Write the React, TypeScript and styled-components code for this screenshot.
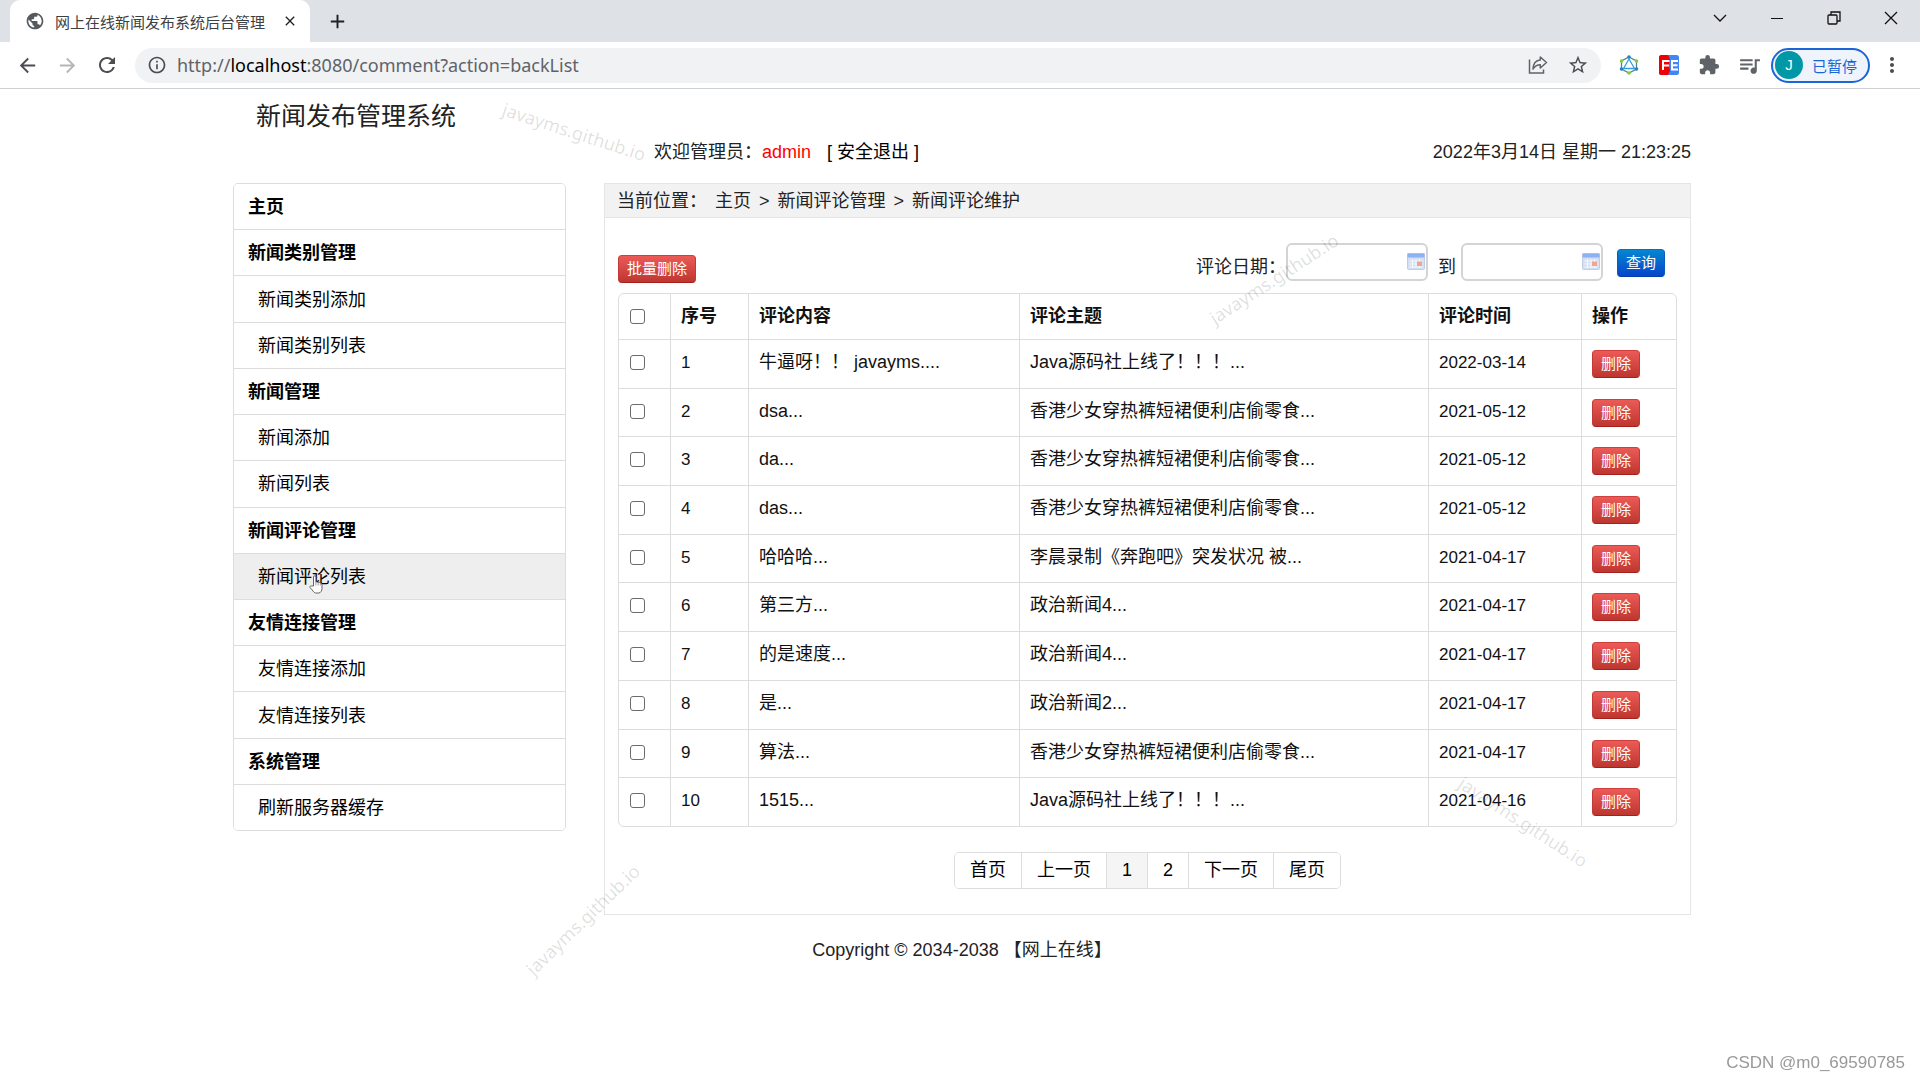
import React from "react";
import styled, { createGlobalStyle, css } from "styled-components";
import {
  MdAdd,
  MdArrowBack,
  MdArrowForward,
  MdClose,
  MdExtension,
  MdInfoOutline,
  MdMoreVert,
  MdPublic,
  MdQueueMusic,
  MdRefresh,
  MdStarBorder,
} from "react-icons/md";

const GlobalStyle = createGlobalStyle`
  * { box-sizing: border-box; }
  body {
    margin: 0;
    background: #fff;
    color: #222;
    font-family: "Liberation Sans", "Noto Sans CJK SC", sans-serif;
    font-size: 18px;
    line-height: 25px;
  }
  a { color: #000; text-decoration: none; }
  button, input { font-family: inherit; }
`;

/* ---------- Browser frame ---------- */

const TabStrip = styled.div`
  display: flex;
  height: 42px;
  padding-left: 10px;
  background: #dee1e6;
`;

const Tab = styled.div`
  display: flex;
  align-items: center;
  width: 300px;
  padding: 0 12px 0 15px;
  border-radius: 10px 10px 0 0;
  background: #fff;
  color: #3c4043;
  font-family: "Noto Sans CJK SC", sans-serif;
  font-size: 15px;
`;

const TabTitle = styled.span`
  flex: 1;
  margin-left: 10px;
  white-space: nowrap;
`;

const IconButton = styled.button<{ $w?: number; $color?: string }>`
  display: flex;
  flex: none;
  align-items: center;
  justify-content: center;
  width: ${(p) => p.$w ?? 40}px;
  padding: 0;
  border: 0;
  background: none;
  color: ${(p) => p.$color ?? "#4a4d51"};
`;

const WindowControls = styled.div`
  display: flex;
  height: 36px;
  margin-left: auto;
`;

const Toolbar = styled.div`
  display: flex;
  align-items: center;
  height: 47px;
  padding: 0 7px;
  border-bottom: 1px solid #cfd1d4;
  background: #fff;
`;

const AddressBar = styled.div`
  display: flex;
  flex: 1;
  align-items: center;
  height: 35px;
  margin: 0 8px;
  padding: 0 3px 0 12px;
  border-radius: 18px;
  background: #f0f2f4;
`;

const Url = styled.span`
  flex: 1;
  margin-left: 10px;
  color: #5f6368;
  font-family: "Noto Sans", sans-serif;
  font-size: 18px;

  b { color: #000; font-weight: 400; }
`;

const Profile = styled.button`
  display: flex;
  align-items: center;
  width: 99px;
  height: 35px;
  margin-left: 2px;
  padding: 0 0 0 2px;
  border: 2px solid #1a66d6;
  border-radius: 18px;
  background: #eff3fb;
  color: #1a66d6;
  font-size: 15px;
`;

const Avatar = styled.span`
  width: 28px;
  height: 28px;
  margin-right: 9px;
  border-radius: 50%;
  background: #0097a7;
  color: #fff;
  line-height: 28px;
`;

/* ---------- Page ---------- */

const Page = styled.div`
  position: relative;
  max-width: 1462px;
  margin: 0 auto;
  padding: 0 0 40px 4px;
`;

const columns = css`
  display: grid;
  grid-template-columns: 333px 1fr;
  column-gap: 38px;
  align-items: start;
`;

const Header = styled.header`
  ${columns}
  height: 94px;
`;

const Title = styled.h1`
  margin: 8px 0 0 23px;
  font-size: 25px;
  font-weight: 400;
  line-height: 38px;
`;

const UserLine = styled.div`
  display: flex;
  padding: 51px 0 0 50px;
`;

const UserName = styled.span`
  margin-right: 16px;
  color: #f00;
`;

const Clock = styled.time`
  margin-left: auto;
`;

const Body = styled.div`
  ${columns}
`;

const Menu = styled.nav`
  display: flex;
  flex-direction: column;
  min-height: 648px;
  border: 1px solid #ddd;
  border-radius: 5px;
  overflow: hidden;
`;

const MenuLink = styled.a<{ $group?: boolean; $active?: boolean }>`
  display: flex;
  flex: 1;
  align-items: center;
  padding: 11px ${(p) => (p.$group ? 14 : 24)}px 9px;
  background: ${(p) => (p.$active ? "#eee" : "#fff")};
  font-weight: ${(p) => (p.$group ? 700 : 400)};

  & + & { border-top: 1px solid #ddd; }
`;

const Panel = styled.main`
  border: 1px solid #e5e5e5;
`;

const Breadcrumb = styled.ol`
  display: flex;
  gap: 8px;
  margin: 0;
  padding: 5px 12px 3px;
  border-bottom: 1px solid #e5e5e5;
  background: #f2f2f2;
  list-style: none;

  a { color: #222; }
`;

const Content = styled.div`
  padding: 25px 13px 25px;
`;

const Actions = styled.div`
  display: flex;
  align-items: flex-end;
  justify-content: space-between;
  height: 40px;
  margin-bottom: 10px;
`;

const Button = styled.button<{ $blue?: boolean }>`
  height: 28px;
  padding: 0 8px;
  border: 1px solid;
  border-color: ${(p) => (p.$blue ? "#0a6cc4 #0a5cc0 #003fa8" : "#cf403c #c23a35 #a5211c")};
  border-radius: 4px;
  background: ${(p) =>
    p.$blue ? "linear-gradient(#0587d0, #0546cc)" : "linear-gradient(#ec5a56, #be3630)"};
  color: #fff;
  font-size: 15px;
  line-height: 24px;
`;

const Search = styled.form`
  display: flex;
  align-items: flex-start;
  height: 40px;
  padding-right: 12px;

  label { padding-top: 12px; }
  label + div + label { margin: 0 5px 0 10px; }
  button { margin: 6px 0 0 14px; }
`;

const DateBox = styled.div`
  display: flex;
  align-items: center;
  width: 142px;
  height: 38px;
  padding: 0 1px 2px 6px;
  border: 2px solid #d4d4d4;
  border-radius: 6px;
`;

const DateInput = styled.input`
  flex: 1;
  min-width: 0;
  padding: 0;
  border: 0;
  outline: 0;
  background: none;
  font-size: 18px;
`;

const Table = styled.table`
  width: 100%;
  height: 534px;
  border: 1px solid #ddd;
  border-collapse: separate;
  border-radius: 6px;
  border-spacing: 0;
  table-layout: fixed;
  color: #111;

  th, td {
    padding: 10px 10px 9px;
    overflow: hidden;
    text-align: left;
    vertical-align: top;
    white-space: nowrap;
  }
  th + th, td + td { border-left: 1px solid #ddd; }
  td { height: 48px; border-top: 1px solid #ddd; }
  th { height: 45px; }
  td button { display: block; }
`;

const Col = styled.col<{ $w?: number }>`
  width: ${(p) => (p.$w ? `${p.$w}px` : "auto")};
`;

const NumberCell = styled.td`
  font-size: 17px;
`;

const Check = styled.input`
  display: block;
  width: 15px;
  height: 15px;
  margin: 5px 0 0 1px;
  border: 1px solid #6b6b6b;
  border-radius: 3px;
  background: #fff;
  appearance: none;
`;

const Pagination = styled.nav`
  display: flex;
  width: fit-content;
  margin: 25px auto 0;
  border: 1px solid #ddd;
  border-radius: 5px;
  overflow: hidden;
`;

const PageLink = styled.a<{ $active?: boolean }>`
  padding: 5px 15px;
  background: ${(p) => (p.$active ? "#f5f5f5" : "#fff")};

  & + & { border-left: 1px solid #ddd; }
`;

const Footer = styled.footer`
  margin-top: 23px;
  text-align: center;
`;

/* Rotated marks and the pointer lie over the page content. */
const Mark = styled.span<{ $x: number; $y: number; $angle: number }>`
  position: absolute;
  left: ${(p) => p.$x}px;
  top: ${(p) => p.$y}px;
  color: rgba(0, 0, 0, 0.13);
  font-family: "Noto Sans", sans-serif;
  font-size: 18px;
  pointer-events: none;
  transform: translate(-50%, -50%) rotate(${(p) => p.$angle}deg);
`;

const Pointer = styled.svg`
  position: absolute;
  left: 80px;
  top: 486px;
`;

const Credit = styled.div`
  position: fixed;
  right: 15px;
  bottom: 5px;
  color: #999;
  font-size: 17px;
`;

const ShareIcon = () => (
  <svg width="20" height="20" viewBox="0 0 20 20" fill="none" stroke="#5f6368" strokeWidth="1.5">
    <path d="M1.500 4.500v13.500h14v-3.500" />
    <path d="M12.300 2l6.200 5.500-6.200 5.500V9.800C9 9.800 6.800 11 5 14c.2-5.200 3-8.600 7.300-9z" strokeLinejoin="round" />
  </svg>
);

const HexIcon = () => (
  <svg width="20" height="20" viewBox="0 0 20 20" fill="none">
    <path d="M10 2l7.500 4v8L10 18l-7.500-4V6z" stroke="#5f7f8c" strokeWidth="1.300" />
    <path d="M10 4l5.500 9.500h-11z" stroke="#2f9fe8" strokeWidth="1.300" />
    <g fill="#7ed030"><circle cx="2.500" cy="6" r="1.800" /><circle cx="17.500" cy="6" r="1.800" /><circle cx="10" cy="18" r="1.800" /></g>
    <g fill="#1c86c8"><circle cx="10" cy="2" r="1.800" /><circle cx="2.500" cy="14" r="1.800" /><circle cx="17.500" cy="14" r="1.800" /></g>
  </svg>
);

const FeIcon = () => (
  <svg width="20" height="20" viewBox="0 0 20 20">
    <rect width="20" height="20" rx="2.500" fill="#4285f4" />
    <path d="M2.500 0H9l2 4-1 6 1 6-2 4H2.500A2.500 2.500 0 0 1 0 17.500v-15A2.500 2.500 0 0 1 2.500 0z" fill="#f00000" />
    <g fill="none" stroke="#fff" strokeWidth="2"><path d="M4 15V6h6.500M4 10.500h6" /><path d="M19 6h-6v8.500h6M13 10.300h5.500" /></g>
  </svg>
);

const CalendarIcon = () => (
  <svg width="18" height="17" viewBox="0 0 18 17">
    <rect x="0.500" y="0.500" width="17" height="16" rx="1" fill="#d3dff2" stroke="#c0cde6" />
    <rect x="0.500" y="0.500" width="17" height="4" fill="#8fb0f2" />
    <path d="M2.500 8h13M2.500 11h13M2.500 14h13M5.500 6v9M9 6v9M12.500 6v9" stroke="#f4f8ff" />
    <rect x="10" y="8.500" width="5" height="4.500" fill="#f0a58c" />
  </svg>
);

const menu = [
  { text: "主页", group: true },
  { text: "新闻类别管理", group: true },
  { text: "新闻类别添加" },
  { text: "新闻类别列表" },
  { text: "新闻管理", group: true },
  { text: "新闻添加" },
  { text: "新闻列表" },
  { text: "新闻评论管理", group: true },
  { text: "新闻评论列表", active: true },
  { text: "友情连接管理", group: true },
  { text: "友情连接添加" },
  { text: "友情连接列表" },
  { text: "系统管理", group: true },
  { text: "刷新服务器缓存" },
];

const comments = [
  ["牛逼呀！！ javayms....", "Java源码社上线了！！！...", "2022-03-14"],
  ["dsa...", "香港少女穿热裤短裙便利店偷零食...", "2021-05-12"],
  ["da...", "香港少女穿热裤短裙便利店偷零食...", "2021-05-12"],
  ["das...", "香港少女穿热裤短裙便利店偷零食...", "2021-05-12"],
  ["哈哈哈...", "李晨录制《奔跑吧》突发状况 被...", "2021-04-17"],
  ["第三方...", "政治新闻4...", "2021-04-17"],
  ["的是速度...", "政治新闻4...", "2021-04-17"],
  ["是...", "政治新闻2...", "2021-04-17"],
  ["算法...", "香港少女穿热裤短裙便利店偷零食...", "2021-04-17"],
  ["1515...", "Java源码社上线了！！！...", "2021-04-16"],
];

const pages = ["首页", "上一页", "1", "2", "下一页", "尾页"];

const marks = [
  { x: 345, y: 43, angle: 18 },
  { x: 1045, y: 190, angle: -33 },
  { x: 354, y: 831, angle: -44 },
  { x: 1294, y: 733, angle: 33 },
];

export default function App() {
  return (
    <>
      <GlobalStyle />
      <TabStrip>
        <Tab>
          <MdPublic size={20} color="#55595e" />
          <TabTitle>网上在线新闻发布系统后台管理</TabTitle>
          <IconButton $w={16} $color="#202124" aria-label="关闭标签页"><MdClose size={16} /></IconButton>
        </Tab>
        <IconButton $w={55} $color="#202124" aria-label="新标签页"><MdAdd size={23} /></IconButton>
        <WindowControls>
          <IconButton $w={57} aria-label="搜索标签页">
            <svg width="16" height="16" fill="none" stroke="#111" strokeWidth="1.300"><path d="M2 5l6 6 6-6" /></svg>
          </IconButton>
          <IconButton $w={57} aria-label="最小化">
            <svg width="14" height="14" fill="none" stroke="#111"><path d="M1 7.500h12" /></svg>
          </IconButton>
          <IconButton $w={57} aria-label="还原">
            <svg width="14" height="14" fill="none" stroke="#111" strokeWidth="1.300">
              <rect x="1" y="4" width="9" height="9" rx="1" /><path d="M4 4V1h9v9h-3" />
            </svg>
          </IconButton>
          <IconButton $w={58} aria-label="关闭">
            <svg width="14" height="14" fill="none" stroke="#111" strokeWidth="1.300"><path d="M1 1l12 12M13 1L1 13" /></svg>
          </IconButton>
        </WindowControls>
      </TabStrip>
      <Toolbar>
        <IconButton aria-label="后退"><MdArrowBack size={23} /></IconButton>
        <IconButton $color="#b4b6b9" aria-label="前进"><MdArrowForward size={23} /></IconButton>
        <IconButton aria-label="重新加载"><MdRefresh size={24} /></IconButton>
        <AddressBar>
          <MdInfoOutline size={20} color="#4a4d51" />
          <Url>http://<b>localhost</b>:8080/comment?action=backList</Url>
          <IconButton aria-label="分享"><ShareIcon /></IconButton>
          <IconButton aria-label="收藏"><MdStarBorder size={22} /></IconButton>
        </AddressBar>
        <IconButton aria-label="扩展"><HexIcon /></IconButton>
        <IconButton aria-label="FE 助手"><FeIcon /></IconButton>
        <IconButton $color="#5f6368" aria-label="扩展程序"><MdExtension size={22} /></IconButton>
        <IconButton $color="#5f6368" aria-label="媒体控制"><MdQueueMusic size={25} /></IconButton>
        <Profile><Avatar>J</Avatar>已暂停</Profile>
        <IconButton $w={43} aria-label="菜单"><MdMoreVert size={24} /></IconButton>
      </Toolbar>

      <Page>
        <Header>
          <Title>新闻发布管理系统</Title>
          <UserLine>
            <span>欢迎管理员：</span>
            <UserName>admin</UserName>
            <a href="#logout">[ 安全退出 ]</a>
            <Clock>2022年3月14日 星期一 21:23:25</Clock>
          </UserLine>
        </Header>
        <Body>
          <Menu>
            {menu.map((m) => (
              <MenuLink key={m.text} href="#" $group={m.group} $active={m.active}>{m.text}</MenuLink>
            ))}
          </Menu>
          <Panel>
            <Breadcrumb>
              <li>当前位置：</li>
              <li><a href="#home">主页</a></li>
              <li>&gt;</li>
              <li><a href="#comments">新闻评论管理</a></li>
              <li>&gt;</li>
              <li>新闻评论维护</li>
            </Breadcrumb>
            <Content>
              <Actions>
                <Button type="button">批量删除</Button>
                <Search>
                  <label htmlFor="from">评论日期：</label>
                  <DateBox><DateInput id="from" /><CalendarIcon /></DateBox>
                  <label htmlFor="to">到</label>
                  <DateBox><DateInput id="to" /><CalendarIcon /></DateBox>
                  <Button type="button" $blue>查询</Button>
                </Search>
              </Actions>
              <Table>
                <colgroup>
                  <Col $w={51} /><Col $w={78} /><Col $w={271} /><Col /><Col $w={153} /><Col $w={95} />
                </colgroup>
                <thead>
                  <tr>
                    <th><Check type="checkbox" aria-label="全选" /></th>
                    <th>序号</th>
                    <th>评论内容</th>
                    <th>评论主题</th>
                    <th>评论时间</th>
                    <th>操作</th>
                  </tr>
                </thead>
                <tbody>
                  {comments.map(([text, topic, date], i) => (
                    <tr key={i}>
                      <td><Check type="checkbox" aria-label={`选择 ${i + 1}`} /></td>
                      <NumberCell>{i + 1}</NumberCell>
                      <td>{text}</td>
                      <td>{topic}</td>
                      <NumberCell>{date}</NumberCell>
                      <td><Button type="button">删除</Button></td>
                    </tr>
                  ))}
                </tbody>
              </Table>
              <Pagination>
                {pages.map((p) => (
                  <PageLink key={p} href="#" $active={p === "1"}>{p}</PageLink>
                ))}
              </Pagination>
            </Content>
          </Panel>
        </Body>
        <Footer>Copyright © 2034-2038 【网上在线】</Footer>
        {marks.map((m) => (
          <Mark key={m.x} $x={m.x} $y={m.y} $angle={m.angle}>javayms.github.io</Mark>
        ))}
        <Pointer width="14" height="19" viewBox="0 0 14 19">
          <path
            d="M4.500 11V2a1.200 1.200 0 0 1 2.400 0v5l1-.3 1.200.8 1.200-.2 1 .9 1.200.3.500 1.500v3.500c0 2-1.500 4.500-3 4.500H6.500C5 18 3.500 15 1 12.500.500 11.500 1.500 10.500 2.500 11z"
            fill="#fff"
            stroke="#555"
            strokeWidth="0.900"
          />
          <path d="M6.900 7v3.500M9.200 8v2.500M11.300 8.500v2" stroke="#777" strokeWidth="0.700" />
        </Pointer>
      </Page>
      <Credit>CSDN @m0_69590785</Credit>
    </>
  );
}
